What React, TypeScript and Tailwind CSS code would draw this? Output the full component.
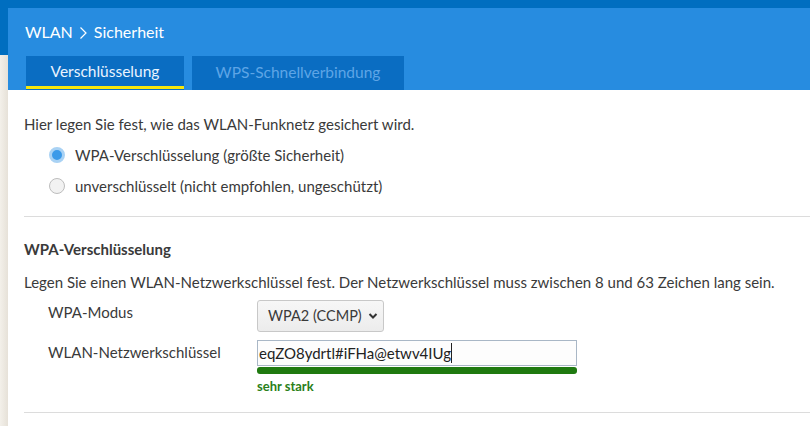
import React from "react";

export default function App() {
  const font = { fontFamily: "Lato, 'Noto Sans', sans-serif" };
  return (
    <div className="w-[810px] h-[426px] overflow-hidden flex flex-col bg-white text-[#3a3a3a]" style={font}>
      <div className="h-2 bg-[#006ec0] shrink-0" />
      <div className="flex flex-1 min-h-0">
        <div className="w-2 shrink-0 flex flex-col">
          <div className="h-[47px] bg-[#006ec0]" />
          <div className="flex-1 bg-gradient-to-r from-[#f3f0ea] to-[#e6e1d8]" />
        </div>
        <div className="flex-1 flex flex-col min-w-0">
          <div className="bg-[#278ce0] flex flex-col">
            <div className="h-12 flex items-center pl-[17px] text-white text-[16px] gap-[6px]">
              <span>WLAN</span>
              <svg width="9" height="14" viewBox="0 0 9 14" className="mt-[1px]">
                <path d="M1.5 1.5 L7 7 L1.5 12.5" fill="none" stroke="white" strokeWidth="1.2" />
              </svg>
              <span>Sicherheit</span>
            </div>
            <div className="h-[34px] flex pl-[18px] gap-2">
              <div className="w-[158px] bg-[#0a6dc2] flex flex-col">
                <div className="flex-1 flex items-center justify-center text-[#eaf4ff] text-[15.5px] pt-[2px]">Verschlüsselung</div>
                <div className="h-[3px] bg-[#f5e60c] mb-[1px]" />
              </div>
              <div className="w-[212px] bg-[#0a6dc2] flex items-center justify-center text-[#5ea5e6] text-[15.5px]">
                WPS-Schnellverbindung
              </div>
            </div>
          </div>
          <div className="pl-4 flex flex-col text-[15px]">
            <div className="pt-[24px] leading-[20px]">Hier legen Sie fest, wie das WLAN-Funknetz gesichert wird.</div>
            <div className="pl-[25px] flex flex-col">
              <label className="flex items-center gap-[10px] mt-[11px] h-5">
                <span className="w-4 h-4 rounded-full bg-[#3b9ae9] border-[3px] border-[#a9d2f4] box-border" />
                <span>WPA-Verschlüsselung (größte Sicherheit)</span>
              </label>
              <label className="flex items-center gap-[10px] mt-[11px] h-5">
                <span className="w-4 h-4 rounded-full bg-[#f2f2f2] border border-[#bdbdbd] box-border" />
                <span>unverschlüsselt (nicht empfohlen, ungeschützt)</span>
              </label>
            </div>
            <div className="h-px bg-[#dcdcdc] mt-[20px]" />
            <div className="mt-[22px] leading-[20px] font-bold text-[15px]">WPA-Verschlüsselung</div>
            <div className="mt-[13px] leading-[20px]">Legen Sie einen WLAN-Netzwerkschlüssel fest. Der Netzwerkschlüssel muss zwischen 8 und 63 Zeichen lang sein.</div>
            <div className="pl-6 flex flex-col">
              <div className="flex mt-[8px]">
                <div className="w-[209px] pt-[2px] leading-[20px]">WPA-Modus</div>
                <div className="h-8 w-[127px] pl-[10px] flex items-center gap-[6px] bg-gradient-to-b from-[#f7f7f7] to-[#ececec] border border-[#c8c8c8] rounded-[3px] text-[14.5px]">
                  <span>WPA2 (CCMP)</span>
                  <svg width="10" height="8" viewBox="0 0 10 8">
                    <path d="M1.5 2 L5 5.5 L8.5 2" fill="none" stroke="#333" strokeWidth="2" />
                  </svg>
                </div>
              </div>
              <div className="flex mt-[8px]">
                <div className="w-[209px] pt-[2px] leading-[20px]">WLAN-Netzwerkschlüssel</div>
                <div className="flex flex-col w-[320px]">
                  <div className="h-[26px] border border-[#a9b7c6] bg-[#fdfdfd] flex items-center px-[1px] text-[#222] text-[15px]">
                    <span>eqZO8ydrtl#iFHa@etwv4IUg</span>
                    <span className="w-px h-[20px] bg-[#222]" />
                  </div>
                  <div className="h-[7px] mt-[1px] rounded-[3px] bg-[#1f7a10]" />
                  <div className="mt-[4px] text-[13px] font-bold text-[#2a7f19] leading-[16px]">sehr stark</div>
                </div>
              </div>
            </div>
            <div className="h-px bg-[#dcdcdc] mt-[18px]" />
          </div>
        </div>
      </div>
    </div>
  );
}
